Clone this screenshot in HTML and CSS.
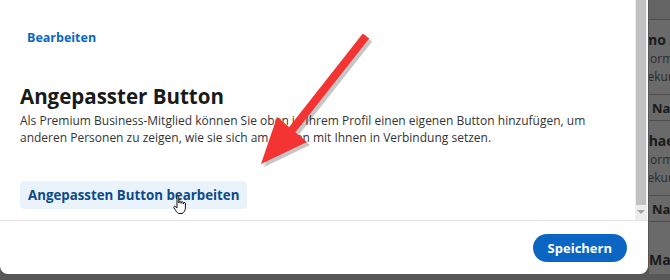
FILE: index.html
```html
<!DOCTYPE html>
<html lang="de">
<head>
    <meta charset="UTF-8">
    <title>Angepasster Button</title>
    <link rel="stylesheet" href="styles.css">
</head>
<body>
    <div class="screen">
        <div class="modal">
            <div class="modal-body">
                <div class="modal-content">
                    <a href="#" class="edit-link">Bearbeiten</a>

                    <h2 class="section-title">Angepasster Button</h2>
                    <p class="section-text">Als Premium Business-Mitglied können Sie oben in Ihrem Profil einen eigenen Button hinzufügen, um anderen Personen zu zeigen, wie sie sich am besten mit Ihnen in Verbindung setzen.</p>

                    <button class="custom-button">Angepassten Button bearbeiten</button>
                </div>
                <div class="scrollbar">
                    <div class="scrollbar-thumb"></div>
                    <div class="scrollbar-arrow"></div>
                </div>
            </div>
            <div class="modal-footer">
                <button class="save-button">Speichern</button>
            </div>
        </div>

        <!-- abgedunkelte Seite hinter dem Dialog -->
        <div class="backdrop">
            <div class="bg-row bg-top"></div>
            <div class="bg-card">
                <div class="bg-name">Timo A.</div>
                <div class="bg-line">Normal</div>
                <div class="bg-line">Sekunde</div>
            </div>
            <div class="bg-action">Nachricht</div>
            <div class="bg-card">
                <div class="bg-name bg-name-wide">Michael</div>
                <div class="bg-line">Normal</div>
                <div class="bg-line">Sekunde</div>
            </div>
            <div class="bg-action">Nachricht</div>
            <div class="bg-card bg-last">
                <div class="bg-name bg-name-last">Mathias</div>
            </div>
        </div>
    </div>

    <!-- Pfeil und Mauszeiger aus dem Screenshot -->
    <svg class="arrow" width="140" height="160" viewBox="0 0 140 160">
        <g transform="translate(3,3)" fill="#000" opacity="0.22">
            <path d="M113.2 14.5 L106.8 9.5 L32.8 103.5 L39.2 108.5 Z"/>
            <path d="M21 93 L51 118 L5 140 Z"/>
        </g>
        <path d="M113.2 14.5 L106.8 9.5 L32.8 103.5 L39.2 108.5 Z" fill="#f43333"/>
        <path d="M21 93 L51 118 L5 140 Z" fill="#f43333"/>
    </svg>

    <svg class="cursor" width="18" height="20" viewBox="0 0 18 20">
        <path d="M5 1.5 C5 0.8 6.8 0.8 6.8 1.5 L6.8 8 L7.2 6.6 C7.4 6 9 6 9 6.8 L9 8.4 L9.4 7.2 C9.6 6.6 11.2 6.6 11.2 7.4 L11.2 9 L11.6 8 C11.8 7.4 13.4 7.4 13.4 8.2 L13.4 13 C13.4 15.5 12 17.5 10 18.5 L6.5 18.5 C5 17.5 3.5 15.5 1.8 12.5 C1.4 11.8 2.4 10.8 3.2 11.5 L5 13 Z" fill="#fff" stroke="#111" stroke-width="1"/>
    </svg>
</body>
</html>
```

FILE: styles.css
```css
* {
    margin: 0;
    padding: 0;
    box-sizing: border-box;
}

body {
    font-family: 'Open Sans', 'Noto Sans', sans-serif;
    background: #585858;
    width: 670px;
    height: 280px;
    overflow: hidden;
    position: relative;
}

.screen {
    display: flex;
    height: 274px;
}

.modal {
    width: 648px;
    height: 274px;
    background: white;
    border-radius: 0 0 8px 8px;
    display: flex;
    flex-direction: column;
    box-shadow: 1px 0 0 #4f4f4f;
}

.modal-body {
    display: flex;
    height: 220px;
}

.modal-content {
    flex: 1;
    padding: 25px 0 0 20px;
}

.edit-link {
    display: inline-block;
    margin-left: 7px;
    color: #0a66c2;
    font-size: 12.5px;
    line-height: 17px;
    font-weight: 700;
    text-decoration: none;
}

.section-title {
    margin-top: 36px;
    font-size: 20.5px;
    font-weight: 700;
    color: #1a1a1a;
    line-height: 26px;
}

.section-text {
    margin-top: 3px;
    font-size: 12px;
    line-height: 17px;
    color: #333;
    width: 580px;
}

.custom-button {
    margin-top: 35px;
    height: 28px;
    padding: 0 8px;
    background: #eaf3fc;
    color: #0b4a8b;
    border: none;
    border-radius: 4px;
    font-family: inherit;
    font-size: 13.3px;
    font-weight: 700;
    cursor: pointer;
}

.scrollbar {
    width: 12px;
    margin-right: 1px;
    background: #ececec;
    display: flex;
    flex-direction: column;
}

.scrollbar-thumb {
    height: 205px;
    margin: 0 1px;
    background: #c1c1c1;
}

.scrollbar-arrow {
    margin: 5px auto 0;
    width: 0;
    height: 0;
    border-left: 4px solid transparent;
    border-right: 4px solid transparent;
    border-top: 4px solid #a3a3a3;
}

.modal-footer {
    flex: 1;
    border-top: 1px solid #e3e3e3;
    display: flex;
    justify-content: flex-end;
    align-items: center;
    padding: 0 21px 0 0;
}

.save-button {
    height: 28px;
    padding: 0 15px;
    background: #0a66c2;
    color: white;
    border: none;
    border-radius: 14px;
    font-family: inherit;
    font-size: 13px;
    font-weight: 700;
    cursor: pointer;
}

.backdrop {
    flex: 1;
    overflow: hidden;
    background: #6a6a6a;
    color: #1b1b1b;
    font-size: 12px;
    white-space: nowrap;
    border-left: 1px solid #555;
}

.bg-row {
    height: 20px;
    border-bottom: 1px solid #4e4e4e;
    background: #646464;
}

.bg-card {
    height: 75px;
    padding-top: 10px;
    border-bottom: 1px solid #4e4e4e;
}

.bg-name {
    margin-left: -18px;
    font-weight: 700;
    font-size: 14px;
    line-height: 20px;
}

.bg-name-wide {
    margin-left: -25px;
}

.bg-line {
    margin-left: -8px;
    line-height: 18px;
    color: #2a2a2a;
}

.bg-name-last {
    margin-left: 0;
    margin-top: 18px;
}

.bg-action {
    height: 26px;
    line-height: 26px;
    padding-left: 3px;
    font-weight: 700;
    font-size: 13px;
    border-bottom: 1px solid #4e4e4e;
}

.bg-last {
    border-bottom: none;
}

.arrow {
    position: absolute;
    left: 256px;
    top: 24px;
}

.cursor {
    position: absolute;
    left: 172px;
    top: 195px;
}
```
